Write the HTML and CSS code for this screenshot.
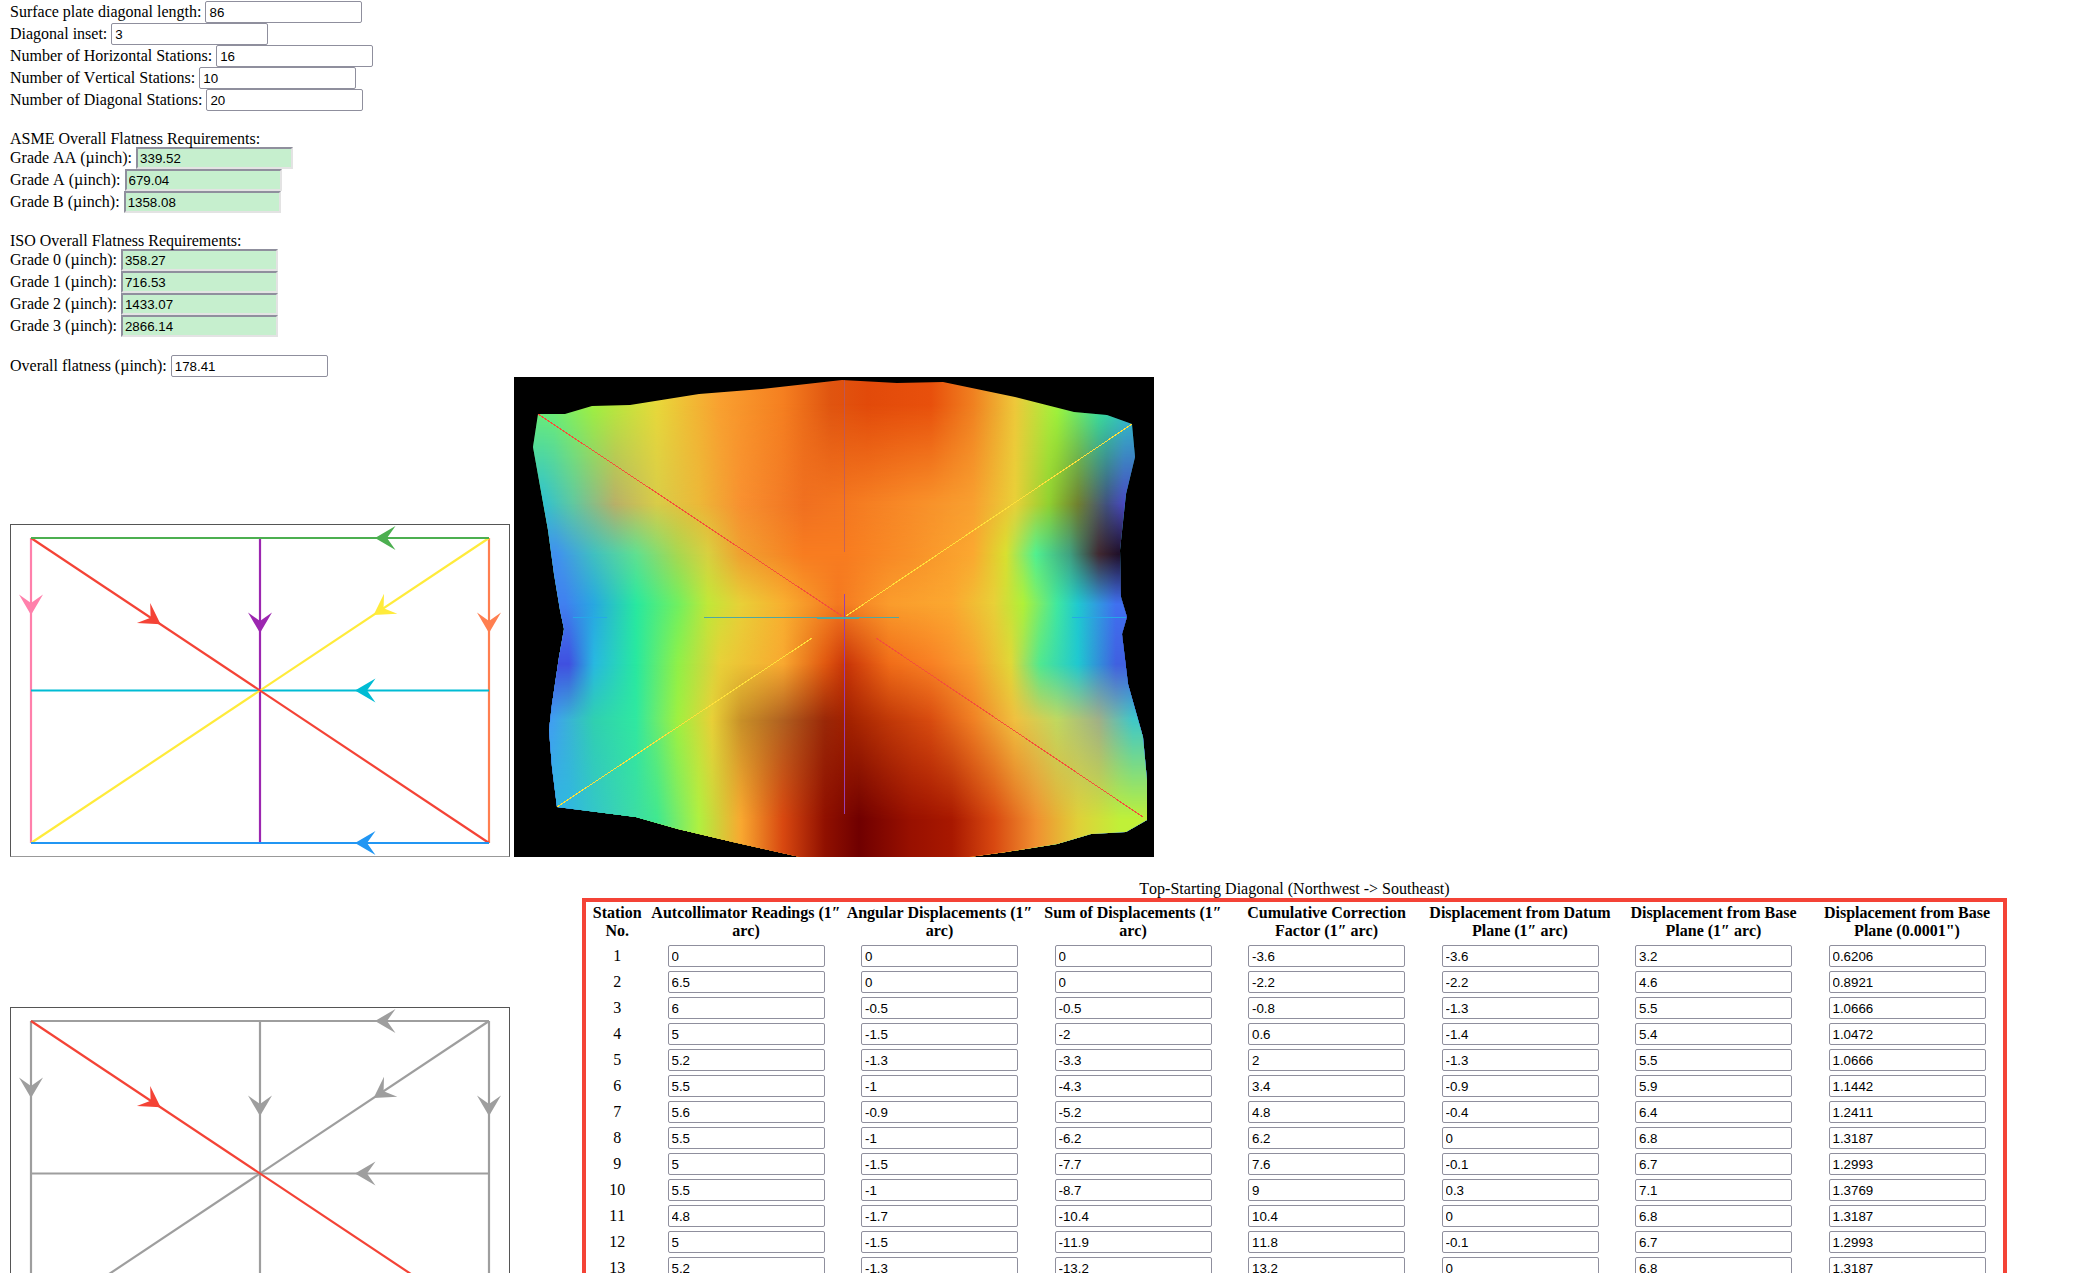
FILE: index.html
```html
<!DOCTYPE html>
<html lang="en">
<head>
<meta charset="utf-8">
<title>Surface plate flatness</title>
<link rel="stylesheet" href="styles.css">
</head>
<body>
<section class="form-block">
  <div class="row"><label>Surface plate diagonal length:</label><input value="86"></div>
  <div class="row"><label>Diagonal inset:</label><input value="3"></div>
  <div class="row"><label>Number of Horizontal Stations:</label><input value="16"></div>
  <div class="row"><label>Number of Vertical Stations:</label><input value="10"></div>
  <div class="row"><label>Number of Diagonal Stations:</label><input value="20"></div>
</section>
<section class="form-block">
  <div class="heading">ASME Overall Flatness Requirements:</div>
  <div class="row"><label>Grade AA (µinch):</label><input class="pass" readonly value="339.52"></div>
  <div class="row"><label>Grade A (µinch):</label><input class="pass" readonly value="679.04"></div>
  <div class="row"><label>Grade B (µinch):</label><input class="pass" readonly value="1358.08"></div>
</section>
<section class="form-block">
  <div class="heading">ISO Overall Flatness Requirements:</div>
  <div class="row"><label>Grade 0 (µinch):</label><input class="pass" readonly value="358.27"></div>
  <div class="row"><label>Grade 1 (µinch):</label><input class="pass" readonly value="716.53"></div>
  <div class="row"><label>Grade 2 (µinch):</label><input class="pass" readonly value="1433.07"></div>
  <div class="row"><label>Grade 3 (µinch):</label><input class="pass" readonly value="2866.14"></div>
</section>
<section class="form-block">
  <div class="row"><label>Overall flatness (µinch):</label><input value="178.41"></div>
</section>

<section class="visuals">
  <svg class="diagram" viewBox="1 1 498 331">
    <defs>
      <path id="head" d="M0 0L20.5-12L12 0L20.5 12Z"/>
    </defs>
    <g class="lines">
      <line class="pink" x1="21" y1="14" x2="21" y2="319"/>
      <line class="orange" x1="479" y1="14" x2="479" y2="319"/>
      <line class="purple" x1="250" y1="14" x2="250" y2="319"/>
      <line class="cyan" x1="21" y1="166.5" x2="479" y2="166.5"/>
      <line class="yellow" x1="479" y1="14" x2="21" y2="319"/>
      <line class="red" x1="21" y1="14" x2="479" y2="319"/>
      <line class="green" x1="21" y1="14" x2="479" y2="14"/>
      <line class="blue" x1="21" y1="319" x2="479" y2="319"/>
    </g>
    <use class="f-green" href="#head" transform="translate(365 14)"/>
    <use class="f-pink" href="#head" transform="translate(21 91) rotate(-90)"/>
    <use class="f-purple" href="#head" transform="translate(250 109) rotate(-90)"/>
    <use class="f-orange" href="#head" transform="translate(479 109) rotate(-90)"/>
    <use class="f-cyan" href="#head" transform="translate(345 166.5)"/>
    <use class="f-blue" href="#head" transform="translate(345 319)"/>
    <use class="f-red" href="#head" transform="translate(150.6 100.3) rotate(213.66)"/>
    <use class="f-yellow" href="#head" transform="translate(363.6 91) rotate(-33.66)"/>
  </svg>

  <div class="heatmap">
    <div class="surface">
      <div class="band b0"></div>
      <div class="band b1"></div>
      <div class="band b2"></div>
      <div class="band b3"></div>
      <div class="band b4"></div>
      <div class="band b5"></div>
      <div class="band b6"></div>
      <svg class="traces" viewBox="0 0 640 480">
        <line class="t-red" x1="24" y1="37" x2="328" y2="239"/>
        <line class="t-red" x1="362" y1="261" x2="629" y2="440"/>
        <line class="t-yellow" x1="618" y1="47" x2="332" y2="239"/>
        <line class="t-yellow" x1="298" y1="261" x2="43" y2="430"/>
        <line class="t-purple-dash" x1="330.5" y1="3" x2="330.5" y2="175"/>
        <line class="t-purple" x1="330.5" y1="217" x2="330.5" y2="437"/>
        <line class="t-blue" x1="59" y1="240.5" x2="93" y2="240.5"/>
        <line class="t-blue" x1="558" y1="240.5" x2="612" y2="240.5"/>
        <line class="t-teal" x1="190" y1="240.5" x2="385" y2="240.5"/>
        <line class="t-teal-wide" x1="303" y1="240.5" x2="345" y2="240.5"/>
      </svg>
    </div>
  </div>
</section>

<section class="results">
  <svg class="diagram lower" viewBox="1 1 498 331">
    <g class="lines">
      <line class="grey" x1="21" y1="14" x2="21" y2="319"/>
      <line class="grey" x1="479" y1="14" x2="479" y2="319"/>
      <line class="grey" x1="250" y1="14" x2="250" y2="319"/>
      <line class="grey" x1="21" y1="166.5" x2="479" y2="166.5"/>
      <line class="grey" x1="479" y1="14" x2="21" y2="319"/>
      <line class="grey" x1="21" y1="14" x2="479" y2="14"/>
      <line class="grey" x1="21" y1="319" x2="479" y2="319"/>
      <line class="red" x1="21" y1="14" x2="479" y2="319"/>
    </g>
    <use class="f-grey" href="#head" transform="translate(365 14)"/>
    <use class="f-grey" href="#head" transform="translate(21 91) rotate(-90)"/>
    <use class="f-grey" href="#head" transform="translate(250 109) rotate(-90)"/>
    <use class="f-grey" href="#head" transform="translate(479 109) rotate(-90)"/>
    <use class="f-grey" href="#head" transform="translate(345 166.5)"/>
    <use class="f-grey" href="#head" transform="translate(345 319)"/>
    <use class="f-red" href="#head" transform="translate(150.6 100.3) rotate(213.66)"/>
    <use class="f-grey" href="#head" transform="translate(363.6 91) rotate(-33.66)"/>
  </svg>

  <table class="stations">
    <caption>Top-Starting Diagonal (Northwest -&gt; Southeast)</caption>
    <thead>
      <tr>
        <th class="station">Station No.</th>
        <th>Autcollimator Readings (1″ arc)</th>
        <th>Angular Displacements (1″ arc)</th>
        <th>Sum of Displacements (1″ arc)</th>
        <th>Cumulative Correction Factor (1″ arc)</th>
        <th>Displacement from Datum Plane (1″ arc)</th>
        <th>Displacement from Base Plane (1″ arc)</th>
        <th>Displacement from Base Plane (0.0001")</th>
      </tr>
    </thead>
    <tbody>
      <tr><td>1</td><td><input value="0"></td><td><input value="0"></td><td><input value="0"></td><td><input value="-3.6"></td><td><input value="-3.6"></td><td><input value="3.2"></td><td><input value="0.6206"></td></tr>
      <tr><td>2</td><td><input value="6.5"></td><td><input value="0"></td><td><input value="0"></td><td><input value="-2.2"></td><td><input value="-2.2"></td><td><input value="4.6"></td><td><input value="0.8921"></td></tr>
      <tr><td>3</td><td><input value="6"></td><td><input value="-0.5"></td><td><input value="-0.5"></td><td><input value="-0.8"></td><td><input value="-1.3"></td><td><input value="5.5"></td><td><input value="1.0666"></td></tr>
      <tr><td>4</td><td><input value="5"></td><td><input value="-1.5"></td><td><input value="-2"></td><td><input value="0.6"></td><td><input value="-1.4"></td><td><input value="5.4"></td><td><input value="1.0472"></td></tr>
      <tr><td>5</td><td><input value="5.2"></td><td><input value="-1.3"></td><td><input value="-3.3"></td><td><input value="2"></td><td><input value="-1.3"></td><td><input value="5.5"></td><td><input value="1.0666"></td></tr>
      <tr><td>6</td><td><input value="5.5"></td><td><input value="-1"></td><td><input value="-4.3"></td><td><input value="3.4"></td><td><input value="-0.9"></td><td><input value="5.9"></td><td><input value="1.1442"></td></tr>
      <tr><td>7</td><td><input value="5.6"></td><td><input value="-0.9"></td><td><input value="-5.2"></td><td><input value="4.8"></td><td><input value="-0.4"></td><td><input value="6.4"></td><td><input value="1.2411"></td></tr>
      <tr><td>8</td><td><input value="5.5"></td><td><input value="-1"></td><td><input value="-6.2"></td><td><input value="6.2"></td><td><input value="0"></td><td><input value="6.8"></td><td><input value="1.3187"></td></tr>
      <tr><td>9</td><td><input value="5"></td><td><input value="-1.5"></td><td><input value="-7.7"></td><td><input value="7.6"></td><td><input value="-0.1"></td><td><input value="6.7"></td><td><input value="1.2993"></td></tr>
      <tr><td>10</td><td><input value="5.5"></td><td><input value="-1"></td><td><input value="-8.7"></td><td><input value="9"></td><td><input value="0.3"></td><td><input value="7.1"></td><td><input value="1.3769"></td></tr>
      <tr><td>11</td><td><input value="4.8"></td><td><input value="-1.7"></td><td><input value="-10.4"></td><td><input value="10.4"></td><td><input value="0"></td><td><input value="6.8"></td><td><input value="1.3187"></td></tr>
      <tr><td>12</td><td><input value="5"></td><td><input value="-1.5"></td><td><input value="-11.9"></td><td><input value="11.8"></td><td><input value="-0.1"></td><td><input value="6.7"></td><td><input value="1.2993"></td></tr>
      <tr><td>13</td><td><input value="5.2"></td><td><input value="-1.3"></td><td><input value="-13.2"></td><td><input value="13.2"></td><td><input value="0"></td><td><input value="6.8"></td><td><input value="1.3187"></td></tr>
    </tbody>
  </table>
</section>
</body>
</html>
```

FILE: styles.css
```css
html {
  overflow: hidden;
}

body {
  margin: 0;
  padding: 1px 0 0 10px;
  background: #fff;
  color: #000;
  font: 16px/18px "Liberation Serif", "Times New Roman", serif;
  font-kerning: none;
}

input {
  box-sizing: border-box;
  width: 157px;
  height: 22px;
  margin: 0;
  padding: 0 3px;
  border: 1px solid #8f8f9d;
  border-radius: 2px;
  background: #fff;
  color: #000;
  font: 13.333px "Liberation Sans", Arial, sans-serif;
  font-kerning: none;
}

input.pass {
  padding: 0 2px;
  border: 2px solid;
  border-color: #8f8f9d #e3e3e3 #e3e3e3 #8f8f9d;
  border-radius: 0;
  background: #c6efce;
}

.form-block {
  margin-bottom: 18px;
}

.row {
  display: flex;
  align-items: center;
  gap: 4px;
  height: 22px;
}

.heading {
  position: relative;
  top: 1px;
}

.visuals {
  display: flex;
  align-items: flex-end;
  gap: 4px;
  margin-top: -18px;
}

.diagram {
  flex: none;
  box-sizing: border-box;
  width: 500px;
  height: 333px;
  border: 1px solid #555;
  border-bottom-color: #999;
  background: #fff;
}

.lines line {
  stroke-width: 2.2;
}

.red { stroke: #f44336; }
.pink { stroke: #ff80ab; }
.orange { stroke: #ff7f50; }
.purple { stroke: #9c27b0; }
.cyan { stroke: #00bcd4; }
.yellow { stroke: #ffeb3b; }
.green { stroke: #4caf50; }
.blue { stroke: #2196f3; }
.grey { stroke: #9e9e9e; }

.f-red { fill: #f44336; }
.f-pink { fill: #ff80ab; }
.f-orange { fill: #ff7f50; }
.f-purple { fill: #9c27b0; }
.f-cyan { fill: #00bcd4; }
.f-yellow { fill: #ffeb3b; }
.f-green { fill: #4caf50; }
.f-blue { fill: #2196f3; }
.f-grey { fill: #9e9e9e; }

.heatmap {
  flex: none;
  width: 640px;
  height: 480px;
  background: #000;
}

.surface {
  position: relative;
  width: 640px;
  height: 480px;
  clip-path: polygon(24px 37px, 51px 37px, 78px 29px, 116px 28px, 185px 17px, 248px 12px, 328px 3px, 383px 6px, 429px 5px, 501px 20px, 560px 35px, 593px 38px, 618px 47px, 621px 80px, 612px 117px, 606px 173px, 607px 220px, 613px 240px, 608px 257px, 614px 307px, 629px 360px, 633px 403px, 633px 443px, 612px 455px, 577px 457px, 543px 467px, 492px 475px, 455px 480px, 286px 480px, 219px 465px, 164px 452px, 122px 440px, 67px 433px, 43px 430px, 38px 390px, 35px 353px, 38px 327px, 45px 280px, 50px 252px, 46px 233px, 40px 197px, 34px 153px, 19px 70px);
}

.band {
  position: absolute;
  inset: 0;
}

.b0 {
  background: linear-gradient(to right, #70f070 40px, #a0f040 80px, #e8d83a 143px, #f9a030 206px, #f57f20 269px, #e05510 316px, #e24a0a 354px, #e8500c 417px, #f08020 459px, #eec83a 501px, #a0f53c 543px, #3ae8a0 585px, #30c8c8 614px);
}

.b1 {
  background: linear-gradient(to right, #30c0d0 29px, #60c8a0 59px, #b8b068 101px, #d8cc48 143px, #ecb838 185px, #f89030 227px, #f07020 290px, #f47820 332px, #f88c28 396px, #f8a030 459px, #e8d038 501px, #90d030 535px, #708030 564px, #405080 593px, #4848c0 610px);
  -webkit-mask-image: linear-gradient(to bottom, transparent 27px, #000 127px);
  mask-image: linear-gradient(to bottom, transparent 27px, #000 127px);
}

.b2 {
  background: linear-gradient(to right, #4090f0 42px, #40c0c0 80px, #60e090 122px, #a8d850 164px, #d8d040 194px, #f0a030 227px, #f87c20 290px, #f87c20 332px, #f89028 396px, #fba830 459px, #d8e030 492px, #50f090 522px, #40a080 556px, #402830 585px, #201028 604px);
  -webkit-mask-image: linear-gradient(to bottom, transparent 127px, #000 177px);
  mask-image: linear-gradient(to bottom, transparent 127px, #000 177px);
}

.b3 {
  background: linear-gradient(to right, #4080f0 51px, #28a8e0 80px, #28e8a0 122px, #70f060 164px, #c0e838 194px, #e8d038 227px, #f8b030 269px, #f47820 324px, #fa9c2c 375px, #fba830 438px, #e8d038 480px, #b0f038 509px, #40e8a0 543px, #20c8d0 564px, #4070f0 602px);
  -webkit-mask-image: linear-gradient(to bottom, transparent 177px, #000 227px);
  mask-image: linear-gradient(to bottom, transparent 177px, #000 227px);
}

.b4 {
  background: linear-gradient(to right, #4050e0 55px, #28b8e0 80px, #28e8a0 122px, #90f048 164px, #e8d038 206px, #f8a830 269px, #e05810 311px, #c83408 332px, #f06c18 375px, #f88024 417px, #f8a030 459px, #e0d838 497px, #50e890 526px, #20c8d0 564px, #4060e0 602px);
  -webkit-mask-image: linear-gradient(to bottom, transparent 227px, #000 287px);
  mask-image: linear-gradient(to bottom, transparent 227px, #000 287px);
}

.b5 {
  background: linear-gradient(to right, #40a0f0 38px, #30d0b0 80px, #30e8a0 122px, #a0f040 164px, #e8d038 198px, #c89028 227px, #b06020 269px, #9a2808 311px, #a02000 332px, #c03808 375px, #d84c10 417px, #f08024 459px, #f0c040 501px, #c0d860 543px, #a0b088 585px, #40c8c8 619px);
  -webkit-mask-image: linear-gradient(to bottom, transparent 287px, #000 343px);
  mask-image: linear-gradient(to bottom, transparent 287px, #000 343px);
}

.b6 {
  background: linear-gradient(to right, #30b8e0 55px, #40e890 143px, #b0f040 185px, #f8a830 227px, #d84810 269px, #901000 311px, #700000 345px, #981000 396px, #a81800 438px, #d84810 480px, #f09030 522px, #e0d038 564px, #c0f038 606px);
  -webkit-mask-image: linear-gradient(to bottom, transparent 343px, #000 443px);
  mask-image: linear-gradient(to bottom, transparent 343px, #000 443px);
}

.traces {
  position: absolute;
  inset: 0;
  width: 640px;
  height: 480px;
}

.traces line {
  stroke-width: 1;
  shape-rendering: crispEdges;
}

.t-red { stroke: #f4503a; }
.t-yellow { stroke: #ffe03a; }
.t-purple { stroke: #9a40b0; }
.traces .t-purple-dash { stroke: #b05a70; stroke-opacity: 0.7; }
.t-blue { stroke: #25a8e8; }
.t-teal { stroke: #50a8a0; }
.traces .t-teal-wide { stroke: #50a8a0; stroke-width: 2; }

.results {
  display: flex;
  align-items: flex-start;
  gap: 72px;
  margin-top: 23px;
}

.lower {
  margin-top: 127px;
}

.stations {
  flex: none;
  box-sizing: border-box;
  width: 1425px;
  table-layout: fixed;
  border-collapse: separate;
  border-spacing: 0;
  border: 4px solid #f44336;
}

.stations caption {
  height: 18px;
  font-weight: normal;
}

.stations th {
  box-sizing: border-box;
  width: 193.5px;
  padding: 2px 0 3px 1.5px;
  font-weight: bold;
  text-align: center;
  vertical-align: top;
}

.stations th.station {
  width: 62.5px;
  padding-left: 0;
}

.stations td {
  height: 26px;
  padding: 2px 0 2px 1.5px;
  box-sizing: border-box;
  text-align: center;
  vertical-align: middle;
}

.stations td input {
  display: block;
  margin: 0 auto;
}

.stations td:first-child {
  padding-left: 0;
}
```
